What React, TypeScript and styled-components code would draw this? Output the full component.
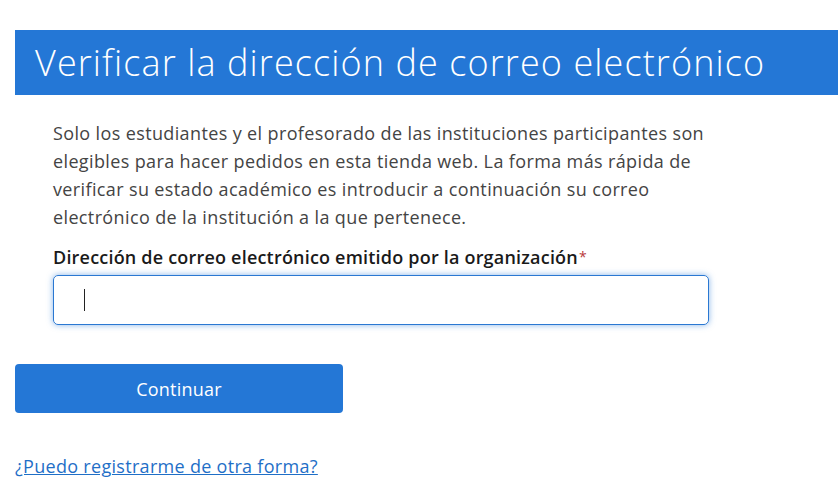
import React from 'react';
import styled, { createGlobalStyle } from 'styled-components';

const GlobalStyle = createGlobalStyle`
  html, body {
    margin: 0;
    padding: 0;
    background: #fff;
    font-family: "Open Sans", Arial, sans-serif;
  }
`;

const Page = styled.div`
  padding: 30px 0 0 15px;
  display: flex;
  flex-direction: column;
`;

const Banner = styled.h1`
  margin: 0;
  height: 65px;
  background: #2477d6;
  color: #fff;
  font-weight: 300;
  font-size: 36px;
  letter-spacing: 1.1px;
  line-height: 65px;
  padding-left: 20px;
  white-space: nowrap;
`;

const Body = styled.div`
  padding: 24px 0 0 38px;
  width: 670px;
`;

const Intro = styled.p`
  margin: 0;
  font-size: 18px;
  letter-spacing: 0.37px;
  line-height: 28px;
  color: #444;
`;

const Label = styled.label`
  display: block;
  margin-top: 14px;
  font-size: 18px;
  font-weight: 600;
  letter-spacing: 0.2px;
  color: #1a1a1a;
  line-height: 24px;
`;

const Req = styled.span`
  color: #b83a3a;
  font-weight: 400;
  font-size: 14px;
  vertical-align: top;
  margin-left: 1px;
`;

const Field = styled.div`
  margin-top: 6px;
  width: 656px;
  height: 50px;
  box-sizing: border-box;
  border: 1px solid #2a78d2;
  border-radius: 5px;
  box-shadow: 0 0 6px rgba(36, 119, 214, 0.55);
  display: flex;
  align-items: center;
  padding-left: 30px;
`;

const Caret = styled.span`
  width: 1px;
  height: 22px;
  background: #222;
`;

const Button = styled.button`
  margin-top: 39px;
  width: 328px;
  height: 49px;
  border: none;
  border-radius: 4px;
  background: #2477d6;
  color: #fff;
  font-family: inherit;
  font-size: 18px;
  letter-spacing: 0.2px;
  cursor: pointer;
`;

const Link = styled.a`
  margin-top: 41px;
  align-self: flex-start;
  color: #1f6fc7;
  font-size: 18px;
  letter-spacing: 0.3px;
  text-decoration: underline;
`;

export default function App() {
  return (
    <>
      <GlobalStyle />
      <Page>
        <Banner>Verificar la dirección de correo electrónico</Banner>
        <Body>
          <Intro>
            Solo los estudiantes y el profesorado de las instituciones participantes son
            elegibles para hacer pedidos en esta tienda web. La forma más rápida de
            verificar su estado académico es introducir a continuación su correo
            electrónico de la institución a la que pertenece.
          </Intro>
          <Label>
            Dirección de correo electrónico emitido por la organización<Req>*</Req>
          </Label>
          <Field>
            <Caret />
          </Field>
        </Body>
        <Button>Continuar</Button>
        <Link href="#">¿Puedo registrarme de otra forma?</Link>
      </Page>
    </>
  );
}
